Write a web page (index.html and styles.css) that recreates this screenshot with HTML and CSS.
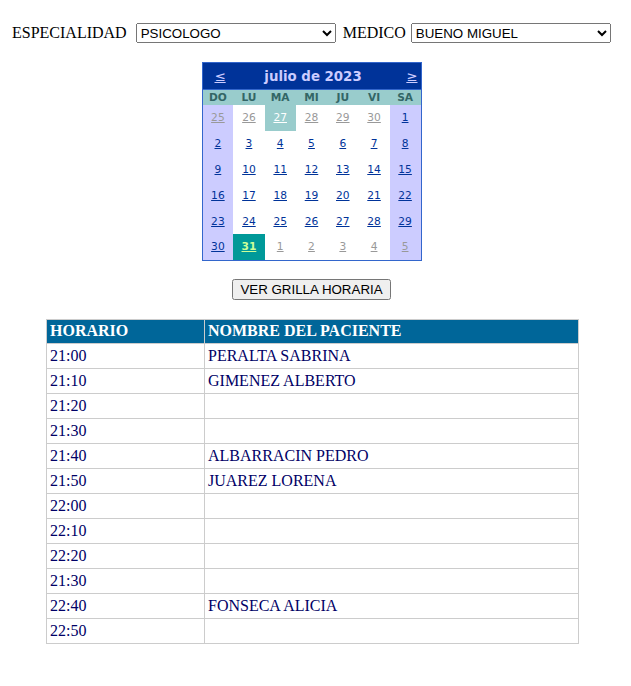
FILE: index.html
```html
<!DOCTYPE html>
<html lang="es">
<head>
<meta charset="utf-8">
<title>Turnos</title>
<link rel="stylesheet" href="styles.css">
</head>
<body>
<div class="page">
  <div class="filters">
    <span class="lbl">ESPECIALIDAD</span>
    <select class="sel"><option>PSICOLOGO</option></select>
    <span class="lbl lbl2">MEDICO</span>
    <select class="sel"><option>BUENO MIGUEL</option></select>
  </div>

  <table class="cal">
    <tr>
      <td class="cal-title" colspan="7">
        <div class="title-row">
          <a class="nav" href="#">&le;</a>
          <span class="month">julio de 2023</span>
          <a class="nav" href="#">&ge;</a>
        </div>
      </td>
    </tr>
    <tr class="dh">
      <th>DO</th><th>LU</th><th>MA</th><th>MI</th><th>JU</th><th>VI</th><th>SA</th>
    </tr>
    <tr class="wk">
      <td class="we om"><a href="#">25</a></td>
      <td class="om"><a href="#">26</a></td>
      <td class="today"><a href="#">27</a></td>
      <td class="om"><a href="#">28</a></td>
      <td class="om"><a href="#">29</a></td>
      <td class="om"><a href="#">30</a></td>
      <td class="we"><a href="#">1</a></td>
    </tr>
    <tr class="wk">
      <td class="we"><a href="#">2</a></td><td><a href="#">3</a></td><td><a href="#">4</a></td><td><a href="#">5</a></td><td><a href="#">6</a></td><td><a href="#">7</a></td><td class="we"><a href="#">8</a></td>
    </tr>
    <tr class="wk">
      <td class="we"><a href="#">9</a></td><td><a href="#">10</a></td><td><a href="#">11</a></td><td><a href="#">12</a></td><td><a href="#">13</a></td><td><a href="#">14</a></td><td class="we"><a href="#">15</a></td>
    </tr>
    <tr class="wk">
      <td class="we"><a href="#">16</a></td><td><a href="#">17</a></td><td><a href="#">18</a></td><td><a href="#">19</a></td><td><a href="#">20</a></td><td><a href="#">21</a></td><td class="we"><a href="#">22</a></td>
    </tr>
    <tr class="wk">
      <td class="we"><a href="#">23</a></td><td><a href="#">24</a></td><td><a href="#">25</a></td><td><a href="#">26</a></td><td><a href="#">27</a></td><td><a href="#">28</a></td><td class="we"><a href="#">29</a></td>
    </tr>
    <tr class="wk">
      <td class="we"><a href="#">30</a></td>
      <td class="selday"><a href="#">31</a></td>
      <td class="om"><a href="#">1</a></td>
      <td class="om"><a href="#">2</a></td>
      <td class="om"><a href="#">3</a></td>
      <td class="om"><a href="#">4</a></td>
      <td class="we om"><a href="#">5</a></td>
    </tr>
  </table>

  <div class="btn-wrap"><button class="btn">VER GRILLA HORARIA</button></div>

  <table class="grid">
    <tr class="gh"><th class="c1">HORARIO</th><th>NOMBRE DEL PACIENTE</th></tr>
    <tr><td class="c1">21:00</td><td>PERALTA SABRINA</td></tr>
    <tr><td class="c1">21:10</td><td>GIMENEZ ALBERTO</td></tr>
    <tr><td class="c1">21:20</td><td></td></tr>
    <tr><td class="c1">21:30</td><td></td></tr>
    <tr><td class="c1">21:40</td><td>ALBARRACIN PEDRO</td></tr>
    <tr><td class="c1">21:50</td><td>JUAREZ LORENA</td></tr>
    <tr><td class="c1">22:00</td><td></td></tr>
    <tr><td class="c1">22:10</td><td></td></tr>
    <tr><td class="c1">22:20</td><td></td></tr>
    <tr><td class="c1">21:30</td><td></td></tr>
    <tr><td class="c1">22:40</td><td>FONSECA ALICIA</td></tr>
    <tr><td class="c1">22:50</td><td></td></tr>
  </table>
</div>
</body>
</html>
```

FILE: styles.css
```css
html, body {
  margin: 0;
  padding: 0;
  background: #ffffff;
}
body {
  margin: 8px;
  font-family: "Liberation Serif", "Times New Roman", serif;
  font-size: 16px;
  color: #000;
}
.page {
  width: 607px;
}
.filters {
  display: flex;
  align-items: center;
  height: 20px;
  margin-top: 15px;
  padding-left: 4px;
}
.lbl {
  margin-right: 9px;
  line-height: 20px;
}
.lbl2 {
  margin-left: 7px;
  margin-right: 5px;
}
.sel {
  width: 200px;
  height: 20px;
  font-family: "Liberation Sans", Arial, sans-serif;
  font-size: 13.33px;
  margin: 0;
}

/* calendar */
.cal {
  margin: 19px auto 0;
  width: 220px;
  border-collapse: collapse;
  border: 1px solid #3366CC;
  table-layout: fixed;
  font-family: Verdana, "DejaVu Sans", sans-serif;
  font-size: 10.67px;
  color: #003399;
  background: #ffffff;
}
.cal td, .cal th {
  padding: 0;
  text-align: center;
}
.cal-title {
  background: #003399;
  height: 26px;
  border: 1px solid #3366CC;
}
.title-row {
  display: flex;
  align-items: center;
  justify-content: space-between;
  padding: 0 3px 0 12px;
}
.cal .nav {
  color: #CCCCFF;
  font-size: 13.33px;
}
.month {
  color: #CCCCFF;
  font-weight: bold;
  font-size: 13.33px;
  margin-left: -6px;
}
.dh th {
  background: #99CCCC;
  color: #336666;
  height: 15px;
  line-height: 13px;
  font-weight: bold;
  font-size: 10.67px;
}
.wk td {
  height: 25.8px;
}
.cal a {
  color: #003399;
}
.we {
  background: #CCCCFF;
}
.cal .om a {
  color: #999999;
}
.today {
  background: #99CCCC;
}
.cal .today a {
  color: #ffffff;
}
.selday {
  background: #009999;
}
.cal .selday a {
  color: #CCFF99;
  font-weight: bold;
}

/* button */
.btn-wrap {
  display: flex;
  justify-content: center;
  margin-top: 18px;
}
.btn {
  font-family: "Liberation Sans", Arial, sans-serif;
  font-size: 13.33px;
  height: 21px;
  padding: 1px 6px;
  margin: 0;
}

/* grid */
.grid {
  margin: 19px 0 0 38px;
  width: 533px;
  border-collapse: collapse;
  border: 1px solid #cccccc;
}
.grid th, .grid td {
  border: 1px solid #cccccc;
  text-align: left;
  padding: 0 3px;
  height: 24px;
  color: #000066;
  font-size: 16px;
}
.grid .c1 {
  width: 151px;
}
.grid .gh th {
  background: #006699;
  color: #ffffff;
  font-weight: bold;
  height: 23px;
}
```
